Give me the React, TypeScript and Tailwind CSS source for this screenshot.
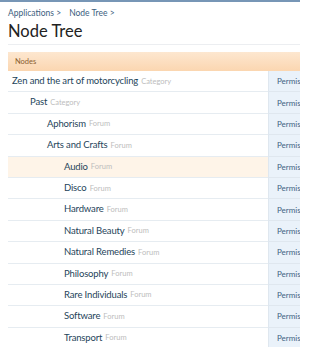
import React from "react";

const nodes: { title: string; type: string; depth: number; hl?: boolean }[] = [
  { title: "Zen and the art of motorcycling", type: "Category", depth: 0 },
  { title: "Past", type: "Category", depth: 1 },
  { title: "Aphorism", type: "Forum", depth: 2 },
  { title: "Arts and Crafts", type: "Forum", depth: 2 },
  { title: "Audio", type: "Forum", depth: 3, hl: true },
  { title: "Disco", type: "Forum", depth: 3 },
  { title: "Hardware", type: "Forum", depth: 3 },
  { title: "Natural Beauty", type: "Forum", depth: 3 },
  { title: "Natural Remedies", type: "Forum", depth: 3 },
  { title: "Philosophy", type: "Forum", depth: 3 },
  { title: "Rare Individuals", type: "Forum", depth: 3 },
  { title: "Software", type: "Forum", depth: 3 },
  { title: "Transport", type: "Forum", depth: 3 },
];

const pads = ["pl-[4px]", "pl-[22px]", "pl-[39px]", "pl-[56px]"];

export default function App() {
  return (
    <div
      className="w-[300px] h-[347px] overflow-hidden bg-white"
      style={{ fontFamily: 'Lato, "Liberation Sans", sans-serif' }}
    >
      <div className="h-[2px] bg-[#7796b6]" />
      <div className="pl-[8px] pt-[6px] text-[8.5px] leading-[10px] text-[#3c6080] flex gap-[8px]">
        <span>Applications &gt;</span>
        <span>Node Tree &gt;</span>
      </div>
      <div className="pl-[8px] pt-[3px] text-[16.5px] leading-[20px] text-[#222] whitespace-nowrap">
        Node Tree
      </div>
      <div className="ml-[8px] mt-[3px] h-[1px] bg-[#eceef1]" />
      <div className="ml-[8px] mt-[7px] h-[19px] bg-gradient-to-b from-[#fde7d0] to-[#fbd6b0] flex items-center pl-[7px] text-[7.5px] text-[#8b5e30]">
        Nodes
      </div>
      <div className="ml-[8px]">
        {nodes.map((n) => (
          <div key={n.title} className="flex h-[21.4px]">
            <div
              className={`flex-1 flex items-center whitespace-nowrap border-b border-[#e6ecf1] ${pads[n.depth]} ${
                n.hl ? "bg-[#fef4e8]" : ""
              }`}
            >
              <span className="text-[9.5px] tracking-[-0.15px] text-[#25445a]">{n.title}</span>
              <span className="ml-[3px] text-[7.5px] text-[#bdbdbd]">{n.type}</span>
            </div>
            <div className="w-[32px] bg-[#eaf2fa] border-l border-b border-[#dfe7ef] flex items-center pl-[8px] overflow-hidden text-[8px] text-[#3f6382]">
              <span className="whitespace-nowrap">Permissions</span>
            </div>
          </div>
        ))}
      </div>
    </div>
  );
}
